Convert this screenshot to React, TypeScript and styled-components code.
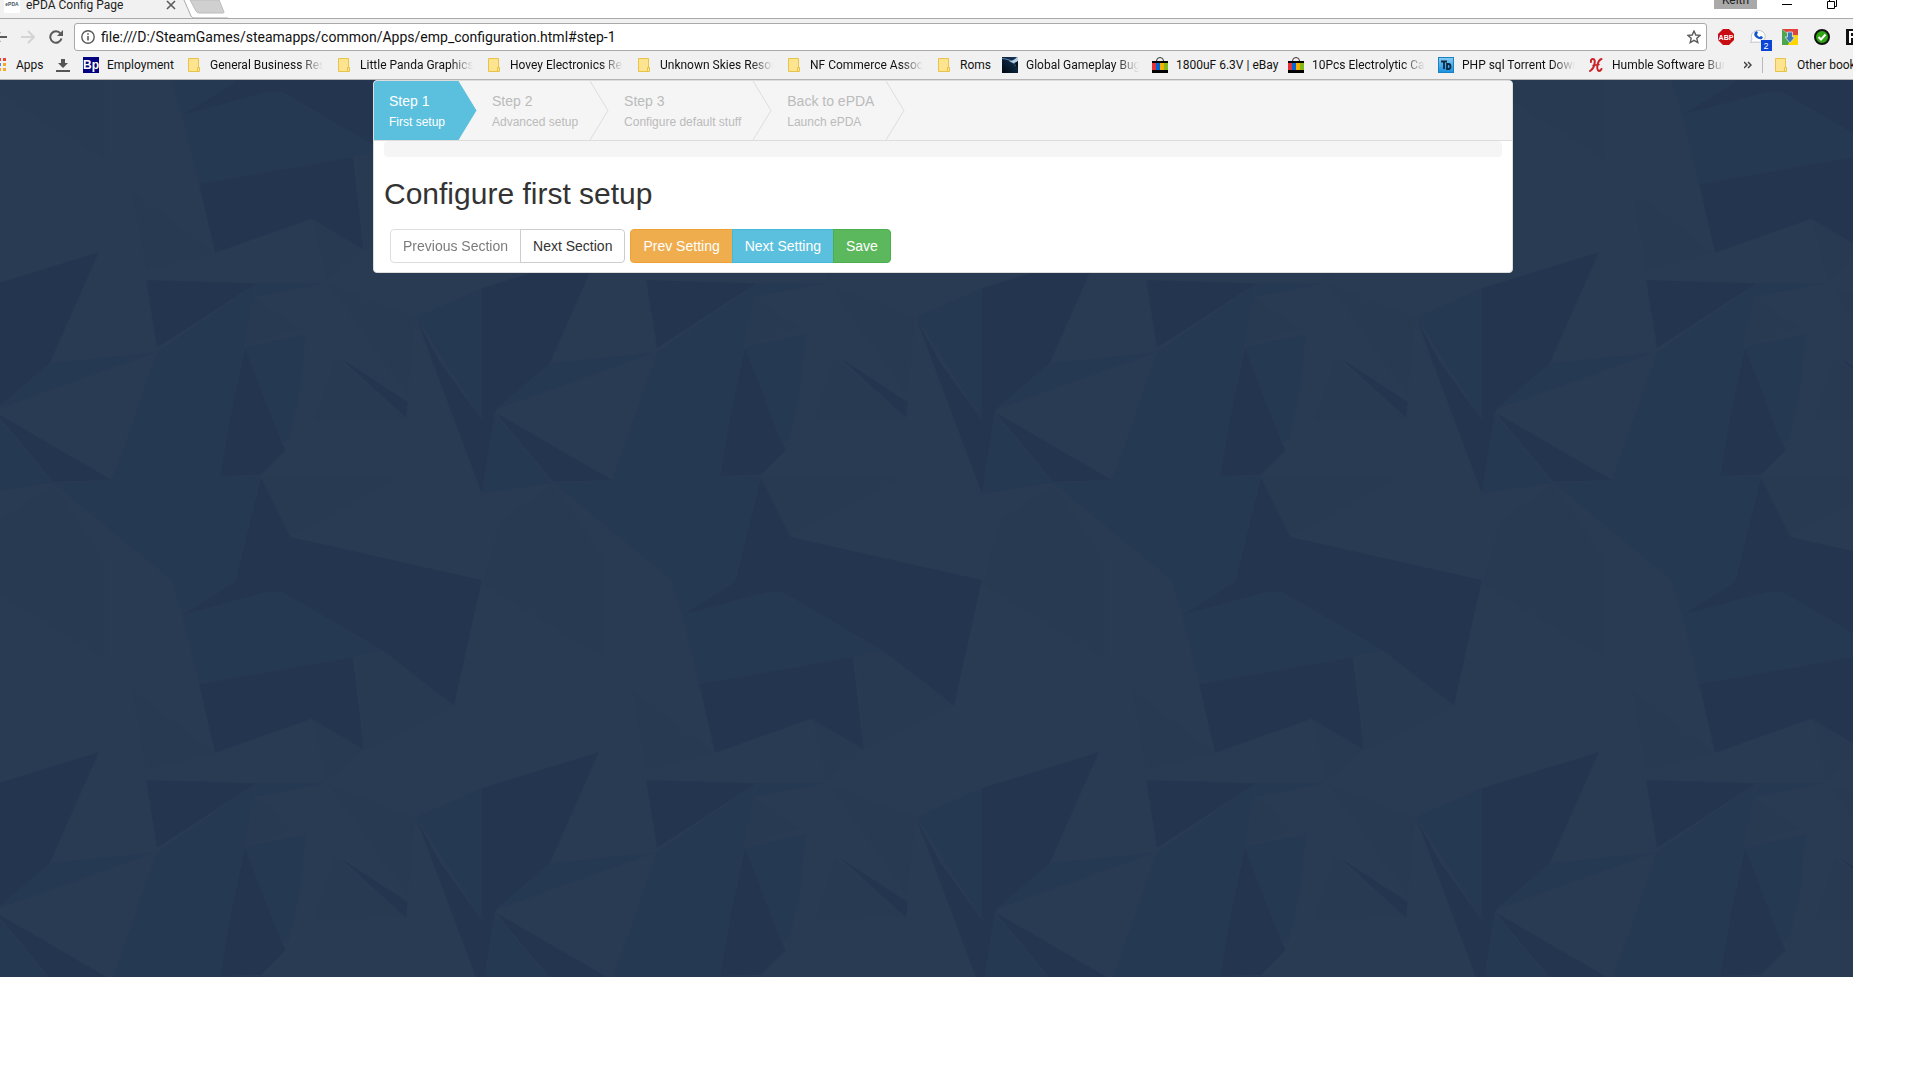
import React from 'react';
import styled, { createGlobalStyle, css } from 'styled-components';

const UI_FONT = 'Roboto, "Open Sans", sans-serif';
const PAGE_FONT = '"Liberation Sans", Arial, sans-serif';

/* ---------- low-poly wallpaper tile, 500 x 500, wraps on every side ---------- */
const DARK = '#24354f';
const MID = '#263952';
const SOFT = '#283a51';
const shapes: [string, string][] = [
  [MID, '157,352 257,283 244,347 220,476 261,476 235,582 182,615 171,580 53,483 112,480'],
  [DARK, '261,477 291,537 482,580 454,706 383,651 282,592 182,615 235,582'],
  [MID, '182,615 267,592 282,592 383,651 353,657 199,684'],
  [DARK, '199,684 353,657 364,750 311,719 215,753'],
  [SOFT, '355,657 383,651 454,706 364,752'],
  [SOFT, '131,688 215,753 146,771'],
  [SOFT, '311,719 364,750 327,782'],
  [DARK, '-18,288 99,252 50,363 -5,412 -18,420'],
  [MID, '50,363 157,352 -5,410'],
  [DARK, '-5,412 112,480 53,482'],
  [MID, '-5,414 53,483 -18,494'],
  [DARK, '146,280 257,283 157,348'],
  [MID, '257,283 327,283 255,297'],
  [SOFT, '255,297 300,328 245,347'],
  [DARK, '245,347 282,443 286,450 261,475 220,476 231,413'],
  [MID, '245,347 306,334 300,393 289,440 282,443'],
  [SOFT, '327,283 416,317 408,397'],
  [DARK, '339,357 408,402 406,418'],
  [SOFT, '335,357 406,418 314,420'],
  [MID, '416,317 482,288 482,420'],
  [DARK, '416,318 440,362 482,420 495,412 482,494'],
  [SOFT, '261,476 400,478 291,537'],
  [SOFT, '53,483 105,560 105,660 -18,584 0,520'],
];
const offsets = [-500, 0, 500];
const tile =
  `<svg xmlns="http://www.w3.org/2000/svg" width="500" height="500"><rect width="500" height="500" fill="#293a53"/>` +
  offsets
    .flatMap((dx) =>
      offsets.map(
        (dy) =>
          `<g transform="translate(${dx + 18} ${dy - 80})">` +
          shapes.map(([fill, points]) => `<polygon fill="${fill}" points="${points}"/>`).join('') +
          `</g>`,
      ),
    )
    .join('') +
  `</svg>`;
const wallpaper = `url("data:image/svg+xml,${encodeURIComponent(tile)}")`;

const Global = createGlobalStyle`
  *, *::before, *::after { box-sizing: border-box; }
  body { margin: 0; background: #fff; font-family: ${PAGE_FONT}; }
  button, input { font: inherit; }
`;

/* ---------- browser window ---------- */
const Window = styled.div`
  display: flex;
  flex-direction: column;
  min-height: calc(100vh - 103px);
  margin-right: 61px;
  overflow: hidden;
  font-family: ${UI_FONT};
`;

const TabStrip = styled.header`
  display: flex;
  align-items: flex-end;
  height: 18px;
  overflow: hidden;
  background: #fff;
`;

const Tab = styled.div`
  display: flex;
  align-items: center;
  width: 180px;
  height: 26px;
  padding: 0 4px;
  background: #f1f1f1;
  font-size: 12px;
  color: #222;
`;

const Favicon = styled.span`
  width: 16px;
  margin-right: 6px;
  padding-bottom: 2px;
  background: #fff;
  color: #456;
  font: bold 5px/14px ${PAGE_FONT};
  text-align: center;
`;

const TabTitle = styled.span`
  flex: 1;
  line-height: 16px;
  white-space: nowrap;
`;

const IconButton = styled.button`
  display: flex;
  flex: none;
  align-items: center;
  justify-content: center;
  padding: 0;
  border: 0;
  background: none;
  color: #5a5a5a;
`;

const TabEdge = styled.svg`
  flex: none;
  display: block;
`;

const WindowControls = styled.div`
  display: flex;
  align-items: flex-end;
  gap: 35px;
  margin-left: auto;
  padding-right: 16px;
`;

const Profile = styled.button`
  width: 43px;
  height: 18px;
  margin: 0 -10px 9px 0;
  padding: 0;
  border: 0;
  background: #a9a9a9;
  color: #222;
  font-size: 12px;
  line-height: 18px;
`;

const Toolbar = styled.form`
  display: flex;
  align-items: flex-start;
  height: 34px;
  padding-top: 4px;
  border-top: 1px solid #a9a9a9;
  background: #f1f1f1;
`;

const NavButtons = styled.div`
  display: flex;
  align-items: center;
  gap: 14px;
  width: 74px;
  height: 28px;
`;

const AddressBar = styled.label`
  display: flex;
  flex: 1;
  align-items: center;
  height: 28px;
  padding: 0 5px 0 6px;
  gap: 6px;
  border: 1px solid #a9a9a9;
  border-radius: 3px;
  background: #fff;
`;

const Address = styled.input`
  flex: 1;
  min-width: 0;
  padding: 0;
  border: 0;
  outline: 0;
  background: none;
  color: #111;
  font-size: 14px;
  line-height: 20px;
`;

const Extensions = styled.div`
  display: flex;
  align-items: center;
  gap: 16px;
  width: 146px;
  height: 28px;
  padding-left: 11px;
`;

const BookmarksBar = styled.nav`
  display: flex;
  align-items: center;
  height: 28px;
  padding-bottom: 1px;
  overflow: hidden;
  border-bottom: 1px solid #b4b4b4;
  background: #f1f1f1;
`;

const Bookmark = styled.a<{ $last?: boolean }>`
  display: flex;
  flex: none;
  align-items: center;
  gap: 8px;
  margin-right: ${(p) => (p.$last ? 0 : 13)}px;
  color: #111;
  font-size: 12px;
  line-height: 16px;
  text-decoration: none;
`;

const BookmarkLabel = styled.span<{ $width: number; $fade?: boolean }>`
  width: ${(p) => p.$width}px;
  white-space: nowrap;
  ${(p) =>
    p.$fade &&
    css`
      overflow: hidden;
      mask-image: linear-gradient(to right, #000 80%, transparent);
    `}
`;

const Divider = styled.span`
  flex: none;
  width: 1px;
  height: 16px;
  margin: 0 10px;
  background: #b9b9b9;
`;

const Spacer = styled.span`
  flex: 1;
`;

/* ---------- page ---------- */
const Page = styled.main`
  flex: 1;
  padding-left: 33px;
  background: #293a53 ${wallpaper} -18px 0;
  font-family: ${PAGE_FONT};
`;

const Panel = styled.section`
  max-width: 1140px;
  margin: 0 auto;
  overflow: hidden;
  border: 1px solid #ddd;
  border-radius: 4px;
  background: #fff;
`;

const Steps = styled.nav`
  display: flex;
  border-bottom: 1px solid #ddd;
  background: #f5f5f5;
`;

const Step = styled.a<{ $active?: boolean }>`
  position: relative;
  display: flex;
  flex-direction: column;
  gap: 1px;
  height: 59px;
  padding: 10px 12px 0 34px;
  background: ${(p) => (p.$active ? '#5bc0de' : '#f5f5f5')};
  color: ${(p) => (p.$active ? '#fff' : '#bbb')};
  font-size: 14px;
  line-height: 20px;
  text-decoration: none;
  &:first-child {
    padding: 10px 13px 0 15px;
  }
`;

const StepNote = styled.small`
  font-size: 12px;
`;

const Chevron = styled.svg`
  position: absolute;
  z-index: 1;
  top: 0;
  left: 100%;
`;

const Body = styled.div`
  padding: 0 10px 9px;
`;

const Well = styled.div`
  height: 16px;
  border-radius: 4px;
  background: #f5f5f5;
`;

const Title = styled.h2`
  margin: 20px 0 19px;
  color: #333;
  font-size: 30px;
  font-weight: 400;
  line-height: 33px;
`;

const ButtonBar = styled.div`
  display: flex;
  gap: 5px;
  padding-left: 6px;
`;

const ButtonGroup = styled.div`
  display: flex;
`;

const tones = {
  plain: ['#fff', '#ccc', '#333'],
  warning: ['#f0ad4e', '#eea236', '#fff'],
  info: ['#5bc0de', '#46b8da', '#fff'],
  success: ['#5cb85c', '#4cae4c', '#fff'],
};

const Button = styled.button<{ $tone: keyof typeof tones }>`
  padding: 6px 12px;
  border: 1px solid ${(p) => tones[p.$tone][1]};
  background: ${(p) => tones[p.$tone][0]};
  color: ${(p) => tones[p.$tone][2]};
  font-size: 14px;
  line-height: 20px;
  white-space: nowrap;
  &:disabled {
    opacity: 0.65;
  }
  & + & {
    margin-left: -1px;
  }
  &:first-child {
    border-radius: 4px 0 0 4px;
  }
  &:last-child {
    border-radius: 0 4px 4px 0;
  }
`;

/* ---------- icons ---------- */
const FolderIcon = () => (
  <svg width="16" height="16" viewBox="0 0 16 16">
    <path d="M2.5 1.5h10v9h1v4h-11z" fill="#ffe48f" stroke="#e8c34a" />
    <path d="M11.5 14v-3.5h2V14" fill="#ffe48f" stroke="#e8c34a" />
  </svg>
);
const BpIcon = () => (
  <svg width="16" height="16" viewBox="0 0 16 16">
    <rect width="16" height="16" fill="#000080" />
    <text x="8" y="12" fill="#fff" fontFamily="Liberation Sans" fontSize="12" fontWeight="700" textAnchor="middle">Bp</text>
  </svg>
);
const SpaceIcon = () => (
  <svg width="16" height="16" viewBox="0 0 16 16">
    <defs>
      <linearGradient id="sky" x1="0" y1="1" x2="1" y2="0">
        <stop offset="0" stopColor="#01060e" />
        <stop offset=".5" stopColor="#0b2038" />
        <stop offset="1" stopColor="#1c3c5c" />
      </linearGradient>
    </defs>
    <rect width="16" height="16" fill="url(#sky)" />
    <path d="M0 2q8 0 14 7V7Q8 1 0 1z" fill="#5d85a8" />
    <path d="M7 4q5 0 8-4h1v4q-2 2-5 2z" fill="#b4cfe4" />
    <path d="M12 7q3 1 4 6V4z" fill="#06101d" />
  </svg>
);
const EbayIcon = () => (
  <svg width="16" height="16" viewBox="0 0 16 16">
    <path d="M4.500 4q0-3.500 3.500-3.500T11.500 4" fill="none" stroke="#333" />
    <path d="M0 4h16v12H0z" fill="#000" />
    <path d="M0 6h4v7H0z" fill="#e53238" />
    <path d="M4 6h4v7H4z" fill="#0064d2" />
    <path d="M8 6h4v7H8z" fill="#f5af02" />
    <path d="M12 6h4v7h-4z" fill="#86b817" />
  </svg>
);
const TdIcon = () => (
  <svg width="16" height="16" viewBox="0 0 16 16">
    <defs>
      <linearGradient id="td" x1="0" y1="0" x2="0" y2="1">
        <stop offset="0" stopColor="#8accf2" />
        <stop offset="1" stopColor="#1a8fdc" />
      </linearGradient>
    </defs>
    <rect x=".5" y=".5" width="15" height="15" fill="url(#td)" stroke="#1783c6" />
    <path d="M3 4.500h6M6 4.500V12M9 7v5h1.500q2 0 2-2.500T10.500 7z" fill="none" stroke="#0a2a48" strokeWidth="1.800" />
  </svg>
);
const HumbleIcon = () => (
  <svg width="16" height="16" viewBox="0 0 16 16" fill="none" stroke="#cb2229" strokeLinecap="round">
    <path d="M3 5q-.5-3 2-3 2.500 0 1.500 5T2 14" strokeWidth="2" />
    <path d="M13.500 2q-3 1-4 6t1.500 6q1.500 0 2.500-2" strokeWidth="2" />
    <path d="M5 8.500l6-1" strokeWidth="1.500" />
  </svg>
);
const AppsIcon = () => (
  <svg width="8" height="16" viewBox="0 0 8 16">
    <path d="M0 1h1v3H0zM3 1h3v3H3z" fill="#e8453c" />
    <path d="M0 6h1v3H0z" fill="#4285f4" />
    <path d="M3 6h3v3H3z" fill="#f9a825" />
    <path d="M0 11h1v3H0zM3 11h3v3H3z" fill="#f9a825" />
  </svg>
);
const DownloadIcon = () => (
  <svg width="14" height="16" viewBox="0 0 14 16" fill="#555">
    <path d="M5 2h4v4h3l-5 5-5-5h3zM0 13h14v2H0z" />
  </svg>
);

const bookmarks: { label: string; icon: React.ReactNode; width: number; fade?: boolean }[] = [
  { label: 'Employment', icon: <BpIcon />, width: 66 },
  { label: 'General Business Reso', icon: <FolderIcon />, width: 113, fade: true },
  { label: 'Little Panda Graphics', icon: <FolderIcon />, width: 113, fade: true },
  { label: 'Hovey Electronics Res', icon: <FolderIcon />, width: 113, fade: true },
  { label: 'Unknown Skies Resou', icon: <FolderIcon />, width: 113, fade: true },
  { label: 'NF Commerce Associ', icon: <FolderIcon />, width: 113, fade: true },
  { label: 'Roms', icon: <FolderIcon />, width: 29 },
  { label: 'Global Gameplay Bug', icon: <SpaceIcon />, width: 113, fade: true },
  { label: '1800uF 6.3V | eBay', icon: <EbayIcon />, width: 99 },
  { label: '10Pcs Electrolytic Cap', icon: <EbayIcon />, width: 113, fade: true },
  { label: 'PHP sql Torrent Down', icon: <TdIcon />, width: 113, fade: true },
  { label: 'Humble Software Bun', icon: <HumbleIcon />, width: 113, fade: true },
];

const steps = [
  { title: 'Step 1', note: 'First setup', active: true },
  { title: 'Step 2', note: 'Advanced setup' },
  { title: 'Step 3', note: 'Configure default stuff' },
  { title: 'Back to ePDA', note: 'Launch ePDA' },
];

export default function App() {
  return (
    <>
      <Global />
      <Window>
        <TabStrip>
          <Tab>
            <Favicon>ePDA</Favicon>
            <TabTitle>ePDA Config Page</TabTitle>
            <IconButton aria-label="Close tab">
              <svg width="10" height="10" viewBox="0 0 10 10" stroke="currentColor" strokeWidth="1.600">
                <path d="M1 1l8 8M9 1l-8 8" />
              </svg>
            </IconButton>
          </Tab>
          <TabEdge width="48" height="18" viewBox="0 0 48 18">
            <path d="M0 0h4l8 18H0z" fill="#f1f1f1" />
            <path d="M4 0l7 16q1 2 3 2h34" fill="none" stroke="#a9a9a9" />
            <path d="M10 0h29l5 12q0 1-1 1H19q-2 0-3-2z" fill="#d0d0d0" stroke="#bbb" />
          </TabEdge>
          <WindowControls>
            <Profile>Keith</Profile>
            <IconButton aria-label="Minimize">
              <svg width="10" height="18" viewBox="0 0 10 18"><path d="M0 4.500h10" stroke="#000" /></svg>
            </IconButton>
            <IconButton aria-label="Restore">
              <svg width="10" height="18" viewBox="0 0 10 18" fill="none" stroke="#000">
                <path d="M.5 1.500h7v7h-7zM2.500 1V-1M7.500 6.500h2v-8" />
              </svg>
            </IconButton>
          </WindowControls>
        </TabStrip>

        <Toolbar onSubmit={(e) => e.preventDefault()}>
          <NavButtons>
            <IconButton type="button" aria-label="Back">
              <svg width="7" height="16" viewBox="0 0 7 16" fill="none" stroke="#5a5a5a" strokeWidth="2">
                <path d="M0 8h7M0 3l-5 5 5 5" />
              </svg>
            </IconButton>
            <IconButton type="button" aria-label="Forward">
              <svg width="14" height="16" viewBox="0 0 14 16" fill="none" stroke="#d4d4d4" strokeWidth="2">
                <path d="M0 8h12M7 2l6 6-6 6" />
              </svg>
            </IconButton>
            <IconButton type="button" aria-label="Reload">
              <svg width="14" height="14" viewBox="0 0 14 14">
                <path d="M11.500 3.500A5.700 5.700 0 1 0 12.500 8.500" fill="none" stroke="#5a5a5a" strokeWidth="2" />
                <path d="M14 0v6H8z" fill="#5a5a5a" />
              </svg>
            </IconButton>
          </NavButtons>
          <AddressBar>
            <svg width="14" height="14" viewBox="0 0 14 14" fill="none" stroke="#5a5a5a">
              <circle cx="7" cy="7" r="6.200" strokeWidth="1.400" />
              <path d="M7 6v4.500M7 3.300v1.500" strokeWidth="1.600" />
            </svg>
            <Address
              aria-label="Address"
              defaultValue="file:///D:/SteamGames/steamapps/common/Apps/emp_configuration.html#step-1"
            />
            <svg width="14" height="14" viewBox="0 0 14 14" fill="none" stroke="#5a5a5a" strokeWidth="1.400">
              <path d="M7 1l1.800 4 4.200.4-3.200 2.900 1 4.200L7 10.300l-3.800 2.200 1-4.200L1 5.400 5.200 5z" />
            </svg>
          </AddressBar>
          <Extensions>
            <IconButton type="button" aria-label="Adblock Plus">
              <svg width="16" height="16" viewBox="0 0 16 16">
                <path d="M5 0h6l5 5v6l-5 5H5l-5-5V5z" fill="#c70d12" />
                <text x="8" y="11" fill="#fff" fontFamily="Liberation Sans" fontSize="7" fontWeight="700" textAnchor="middle">ABP</text>
              </svg>
            </IconButton>
            <IconButton type="button" aria-label="Voice, 2 new">
              <svg width="16" height="16" viewBox="0 0 16 16" overflow="visible">
                <path d="M.5 13.500L2 10A7 6 0 1 1 6 13z" fill="#fff" stroke="#c2c6cc" />
                <path d="M5 3q-2 3 1 5.500T12 10l1-2-2-1-1.500 1Q7 7 7 5l1-1-1-2z" fill="#1557c8" />
                <path d="M11 11h11v11H11z" fill="#0b45d6" />
                <text x="16" y="20" fill="#fff" fontFamily="Liberation Sans" fontSize="9" textAnchor="middle">2</text>
              </svg>
            </IconButton>
            <IconButton type="button" aria-label="Downloads">
              <svg width="16" height="16" viewBox="0 0 16 16">
                <path d="M0 0h16v6H8z" fill="#e0443a" />
                <path d="M0 0v16h8V7z" fill="#4ca64c" />
                <path d="M16 6v10H6l4-10z" fill="#ffd500" />
                <path d="M5.500 3h5v5H13l-5 6-5-6h2.500z" fill="#3c78b4" stroke="#d8e4ee" strokeWidth=".8" />
              </svg>
            </IconButton>
            <IconButton type="button" aria-label="Safe site">
              <svg width="16" height="16" viewBox="0 0 16 16">
                <circle cx="8" cy="8" r="7" fill="#2fa516" stroke="#111" strokeWidth="2" />
                <path d="M4.500 8l2.500 2.500 4.500-5" fill="none" stroke="#fff" strokeWidth="2" />
              </svg>
            </IconButton>
            <IconButton type="button" aria-label="Extension">
              <svg width="16" height="16" viewBox="0 0 16 16">
                <rect width="16" height="16" fill="#111" />
                <path d="M4 14V3h8M4 8h8" fill="none" stroke="#fff" strokeWidth="2" />
              </svg>
            </IconButton>
          </Extensions>
        </Toolbar>

        <BookmarksBar>
          <Bookmark href="#apps"><AppsIcon /><BookmarkLabel $width={27}>Apps</BookmarkLabel></Bookmark>
          <Bookmark href="#downloads" aria-label="Downloads"><DownloadIcon /></Bookmark>
          {bookmarks.map((b, i) => (
            <Bookmark key={i} href="#bookmark">
              {b.icon}
              <BookmarkLabel $width={b.width} $fade={b.fade}>{b.label}</BookmarkLabel>
            </Bookmark>
          ))}
          <Spacer />
          <IconButton aria-label="More bookmarks">
            <svg width="8" height="8" viewBox="0 0 8 8" fill="none" stroke="#444" strokeWidth="1.500">
              <path d="M0 1l3 3-3 3M4 1l3 3-3 3" />
            </svg>
          </IconButton>
          <Divider />
          <Bookmark href="#other" $last>
            <FolderIcon />
            <BookmarkLabel $width={56}>Other bookmarks</BookmarkLabel>
          </Bookmark>
        </BookmarksBar>

        <Page>
          <Panel>
            <Steps>
              {steps.map((s, i) => (
                <Step key={s.title} href={`#step-${i + 1}`} $active={s.active}>
                  {s.title}
                  <StepNote>{s.note}</StepNote>
                  <Chevron width="19" height="59" viewBox="0 0 19 59">
                    <path
                      d="M0 0l18 29.500L0 59"
                      fill={s.active ? '#5bc0de' : '#f5f5f5'}
                      stroke={s.active ? '#5bc0de' : '#ddd'}
                    />
                  </Chevron>
                </Step>
              ))}
            </Steps>
            <Body>
              <Well />
              <Title>Configure first setup</Title>
              <ButtonBar>
                <ButtonGroup>
                  <Button $tone="plain" disabled>Previous Section</Button>
                  <Button $tone="plain">Next Section</Button>
                </ButtonGroup>
                <ButtonGroup>
                  <Button $tone="warning">Prev Setting</Button>
                  <Button $tone="info">Next Setting</Button>
                  <Button $tone="success">Save</Button>
                </ButtonGroup>
              </ButtonBar>
            </Body>
          </Panel>
        </Page>
      </Window>
    </>
  );
}
